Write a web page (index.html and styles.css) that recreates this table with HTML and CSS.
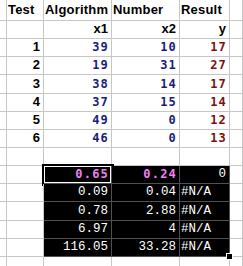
FILE: index.html
```html
<!DOCTYPE html>
<html>
<head>
<meta charset="utf-8">
<link rel="stylesheet" href="styles.css">
</head>
<body>
<div class="sheet">
  <div class="c"></div><div class="c h">Test</div><div class="c h">Algorithm</div><div class="c h">Number</div><div class="c h">Result</div><div class="c"></div>
  <div class="c"></div><div class="c"></div><div class="c r b">x1</div><div class="c r b">x2</div><div class="c r b">y</div><div class="c"></div>

  <div class="c"></div><div class="c r b">1</div><div class="c r n">39</div><div class="c r n">10</div><div class="c r d">17</div><div class="c"></div>
  <div class="c"></div><div class="c r b">2</div><div class="c r n">19</div><div class="c r n">31</div><div class="c r d">27</div><div class="c"></div>
  <div class="c"></div><div class="c r b">3</div><div class="c r n">38</div><div class="c r n">14</div><div class="c r d">17</div><div class="c"></div>
  <div class="c"></div><div class="c r b">4</div><div class="c r n">37</div><div class="c r n">15</div><div class="c r d">14</div><div class="c"></div>
  <div class="c"></div><div class="c r b">5</div><div class="c r n">49</div><div class="c r n">0</div><div class="c r d">12</div><div class="c"></div>
  <div class="c"></div><div class="c r b">6</div><div class="c r n">46</div><div class="c r n">0</div><div class="c r d">13</div><div class="c"></div>

  <div class="c"></div><div class="c"></div><div class="c"></div><div class="c"></div><div class="c"></div><div class="c"></div>

  <div class="c"></div><div class="c"></div><div class="c r k p cur">0.65</div><div class="c r k p">0.24</div><div class="c r k w">0</div><div class="c"></div>
  <div class="c"></div><div class="c"></div><div class="c r k w">0.09</div><div class="c r k w">0.04</div><div class="c k w na">#N/A</div><div class="c"></div>
  <div class="c"></div><div class="c"></div><div class="c r k w">0.78</div><div class="c r k w">2.88</div><div class="c k w na">#N/A</div><div class="c"></div>
  <div class="c"></div><div class="c"></div><div class="c r k w">6.97</div><div class="c r k w">4</div><div class="c k w na">#N/A</div><div class="c"></div>
  <div class="c"></div><div class="c"></div><div class="c r k w">116.05</div><div class="c r k w">33.28</div><div class="c k w na">#N/A</div><div class="c"></div>

  <div class="c"></div><div class="c"></div><div class="c"></div><div class="c"></div><div class="c"></div><div class="c"></div>
  <div class="handle"></div>
</div>
</body>
</html>
```
FILE: styles.css
```css
html, body {
  margin: 0;
  padding: 0;
  background: #fff;
}
.sheet {
  position: relative;
  display: grid;
  grid-template-columns: 7px 37px 68px 68px 50px 1fr;
  grid-template-rows: 21px repeat(14, 18.15px);
  width: 243px;
  height: 266px;
  overflow: hidden;
}
.c {
  box-sizing: border-box;
  border-right: 1px solid #c6c6c6;
  border-bottom: 1px solid #c6c6c6;
  display: flex;
  align-items: flex-end;
  padding: 0 2px 3px 2px;
  white-space: nowrap;
  overflow: visible;
  min-width: 0;
  font-family: "Liberation Sans", Arial, sans-serif;
  font-size: 12px;
  line-height: 12px;
  color: #000;
}
.h {
  font-weight: bold;
  font-size: 13px;
  letter-spacing: 0.2px;
  padding-left: 1px;
  padding-bottom: 4px;
  position: relative;
  z-index: 1;
}
.r { justify-content: flex-end; padding-right: 3px; }
.b { font-weight: bold; font-size: 13px; }
.n, .d, .p {
  font-family: "DejaVu Sans Mono", monospace;
  font-weight: bold;
  font-size: 12px;
  letter-spacing: 1.2px;
  padding-right: 2px;
}
.n { color: #1b1b78; }
.d { color: #7a1010; }
.k {
  background: #000;
  border-right-color: #505050;
  border-bottom-color: #505050;
}
.p { color: #f080f0; }
.w {
  color: #fff;
  font-family: "Liberation Mono", "Courier New", monospace;
  font-size: 12.5px;
}
.na { justify-content: flex-start; padding-left: 1px; }
.cur {
  box-shadow: inset 0 0 0 1px #fff;
  outline: 2px solid #000;
}
.handle {
  position: absolute;
  left: 227px;
  top: 254px;
  width: 5px;
  height: 5px;
  background: #000;
  border: 1px solid #fff;
  box-sizing: content-box;
  margin: -1px 0 0 -1px;
}
```
